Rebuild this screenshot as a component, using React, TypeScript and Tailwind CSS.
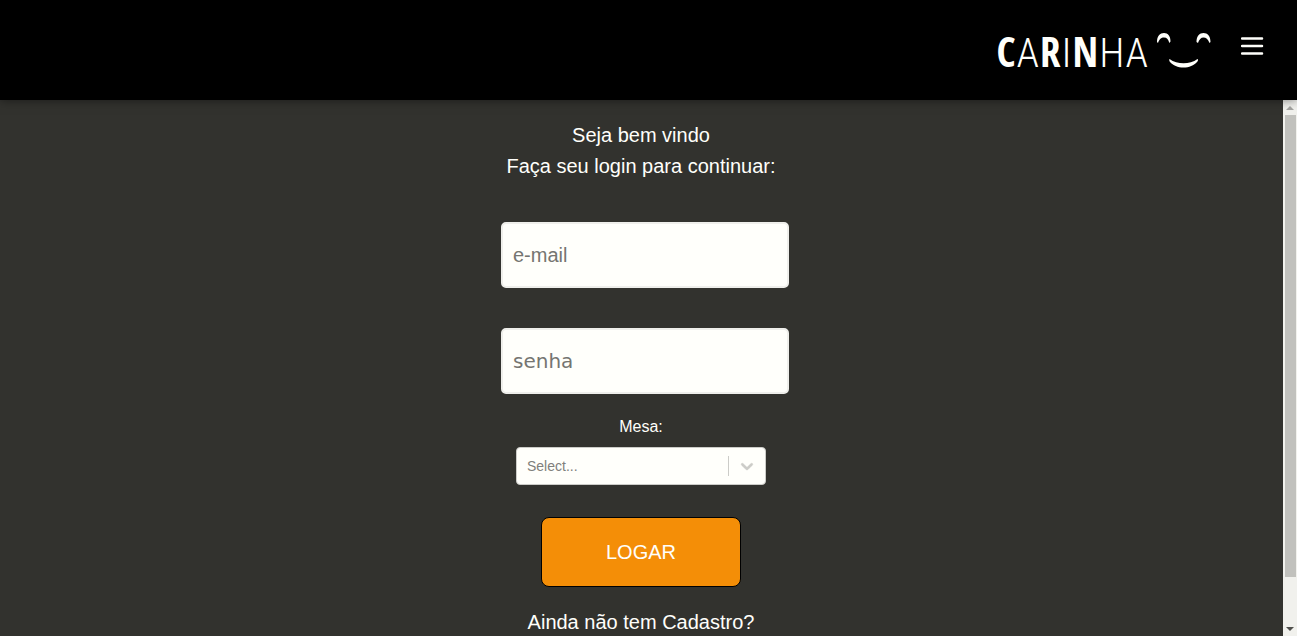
import { useState } from "react";

const heavy = "font-['Open_Sans_Condensed','Roboto_Condensed','Roboto',sans-serif] font-black";
const thin = "font-['Roboto_Condensed','Roboto',sans-serif] font-light";

function Logo() {
  return (
    <a href="#inicio" aria-label="Carinha" className="flex h-[35px] items-end gap-[9px] text-[#fffffb]">
      <span className="flex items-baseline gap-px text-[41px] leading-[30px]">
        <span className={heavy}>C</span>
        <span className={thin}>A</span>
        <span className={heavy}>R</span>
        <span className={thin}>I</span>
        <span className={heavy}>N</span>
        <span className={thin}>H</span>
        <span className={thin}>A</span>
      </span>
      <svg width="54" height="35" viewBox="0 0 54 35" fill="currentColor" aria-hidden="true">
        <path d="M0 9C0 3 3 0 7 0s6.500 3 6.500 8.500l-1.200 1.500C11.500 6.500 10 4.500 7 4.500S2.500 6 1 10Z" />
        <path d="M39.500 9c0-6 3-9 7-9s7 3 7 9l-1 1c-1.500-4-3.500-5.500-6-5.500s-4.500 2-5.500 5.500Z" />
        <path d="M12.500 26c4 3 9 4.200 14 4.200s10-1.200 14-4.200c1 .500.500 2-.500 3-3 3.500-8 5.500-13.500 5.500S16 32.500 13 29c-.800-1-1-2.500-.500-3Z" />
      </svg>
    </a>
  );
}

function ScrollRail() {
  return (
    <div aria-hidden="true" className="flex w-[14px] shrink-0 flex-col items-center bg-[#f1f1ed]">
      <svg width="14" height="15" viewBox="0 0 14 15" className="shrink-0">
        <path d="M3 10h8L7 6Z" fill="#a3a3a0" />
      </svg>
      <div className="w-[11px] grow-[462] bg-[#c1c1bd]" />
      <div className="grow-[44]" />
      <svg width="14" height="15" viewBox="0 0 14 15" className="shrink-0">
        <path d="M3 6h8l-4 4Z" fill="#50504d" />
      </svg>
    </div>
  );
}

const fieldClass =
  "h-[66px] w-[288px] rounded-[5px] border-2 border-[#efefeb] bg-[#fffffb] px-[10px] text-xl text-black placeholder:text-[#757571] outline-none";

export default function App() {
  const [email, setEmail] = useState("");
  const [password, setPassword] = useState("");

  return (
    <div className="flex h-screen flex-col bg-[#32322e] font-['Liberation_Sans',sans-serif] text-[#fffffb]">
      <header className="z-10 flex h-[100px] shrink-0 items-center justify-end gap-[30px] bg-black pr-[33px] shadow-[0_0_10px_rgba(0,0,0,0.5)]">
        <Logo />
        <button type="button" aria-label="Abrir menu" className="mb-2">
          <svg width="23" height="18" viewBox="0 0 23 18" stroke="#fffffb" strokeWidth="2.500" strokeLinecap="round" aria-hidden="true">
            <path d="M1 1.500h20M1 9h20M1 16.500h20" />
          </svg>
        </button>
      </header>

      <div className="flex min-h-0 flex-1">
        <main className="flex-1 overflow-y-auto [scrollbar-width:none]">
          <form className="flex flex-col items-center pt-5 pr-px pb-12" onSubmit={(e) => e.preventDefault()}>
            <h1 className="text-xl leading-[31px]">Seja bem vindo</h1>
            <p className="text-xl leading-[31px]">Faça seu login para continuar:</p>

            <div className="mt-10 flex flex-col gap-10 pl-2">
              <input
                type="email"
                aria-label="e-mail"
                placeholder="e-mail"
                value={email}
                onChange={(e) => setEmail(e.target.value)}
                className={fieldClass}
              />
              <input
                type="password"
                aria-label="senha"
                placeholder="senha"
                value={password}
                onChange={(e) => setPassword(e.target.value)}
                className={`font-['DejaVu_Sans',sans-serif] ${fieldClass}`}
              />
            </div>

            <label htmlFor="mesa" className="mt-[21px] leading-6">
              Mesa:
            </label>
            <div className="relative mt-2">
              <select
                id="mesa"
                defaultValue=""
                className="block h-[38px] w-[250px] appearance-none rounded border border-[#ccccc8] bg-[#fffffb] pr-10 pl-[10px] text-sm text-[#80807c]"
              >
                <option value="">Select...</option>
              </select>
              <div className="pointer-events-none absolute inset-y-[9px] right-[9px] flex items-center gap-2 text-[#ccccc8]">
                <span className="w-px self-stretch bg-current" />
                <svg width="20" height="20" viewBox="0 0 20 20" fill="currentColor" stroke="currentColor" strokeWidth="0.400" aria-hidden="true">
                  <path d="M4.516 7.548c.436-.446 1.043-.481 1.576 0L10 11.295l3.908-3.747c.533-.481 1.141-.446 1.574 0 .436.445.408 1.197 0 1.615-.406.418-4.695 4.502-4.695 4.502a1.095 1.095 0 0 1-1.576 0S4.924 9.581 4.516 9.163s-.436-1.170 0-1.615Z" />
                </svg>
              </div>
            </div>

            <button type="submit" className="mt-8 h-[70px] w-[200px] rounded-lg border border-black bg-[#f48e07] text-xl">
              LOGAR
            </button>
            <p className="mt-5 text-xl leading-[31px]">Ainda não tem Cadastro?</p>
          </form>
        </main>
        <ScrollRail />
      </div>
    </div>
  );
}
